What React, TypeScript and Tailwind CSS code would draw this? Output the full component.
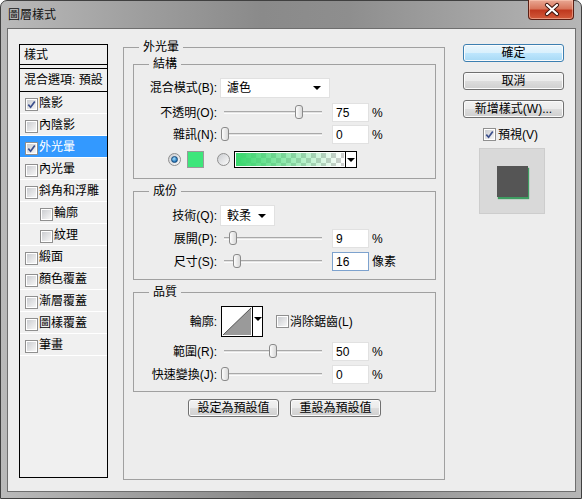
import React from 'react';

const FONT = "font-['Liberation_Sans','Noto_Sans_CJK_TC',sans-serif]";

const LAYERS = [
  { name: '陰影', on: true },
  { name: '內陰影' },
  { name: '外光暈', on: true, active: true },
  { name: '內光暈' },
  { name: '斜角和浮雕' },
  { name: '輪廓', sub: true },
  { name: '紋理', sub: true },
  { name: '緞面' },
  { name: '顏色覆蓋' },
  { name: '漸層覆蓋' },
  { name: '圖樣覆蓋' },
  { name: '筆畫' },
];

function Check({ on, className = '' }: { on?: boolean; className?: string }) {
  return (
    <span className={`relative block h-[13px] w-[13px] shrink-0 border border-[#8f8f8f] bg-white p-[1px] ${className}`}>
      <span className="block h-full w-full bg-[linear-gradient(135deg,#cbcdd1,#f6f6f6)]" />
      {on && (
        <svg className="absolute left-[1px] top-[1px]" width="9" height="9" viewBox="0 0 9 9">
          <path d="M1.3 4.6 L3.6 7.2 L7.8 1.4" fill="none" stroke="#3b4f8c" strokeWidth="1.7" />
        </svg>
      )}
    </span>
  );
}

function Radio({ on }: { on?: boolean }) {
  return (
    <span className="flex h-[13px] w-[13px] shrink-0 items-center justify-center rounded-full border border-[#8f8f8f] bg-[linear-gradient(135deg,#cbcdd1,#fbfbfb)]">
      {on && (
        <span className="h-[7px] w-[7px] rounded-full border border-[#174a7a] bg-[radial-gradient(circle_at_40%_35%,#a9e2ff,#1f73b8_70%)]" />
      )}
    </span>
  );
}

function Caret() {
  return <span className="block h-0 w-0 border-x-[4px] border-t-[4px] border-x-transparent border-t-black" />;
}

function Select({ value, w, h }: { value: string; w: string; h: string }) {
  return (
    <div className={`ml-[3px] flex items-center justify-between border border-[#e1e1e1] bg-white pl-[6px] pr-[8px] ${w} ${h}`}>
      <span>{value}</span>
      <Caret />
    </div>
  );
}

function Slider({ at }: { at: number }) {
  return (
    <div className="relative ml-[4px] h-[19px] w-[101px]">
      <div className="absolute left-[3px] right-0 top-[8px] h-[3px] border-y border-t-[#a9a9a9] border-b-[#fbfbfb] bg-[#e3e3e3]" />
      <div
        className="absolute top-[2px] h-[14px] w-[8px] rounded-[3px] border border-[#8a8a8a] bg-[linear-gradient(to_right,#fdfdfd,#d9d9d9)]"
        style={{ left: at }}
      />
    </div>
  );
}

function SliderRow({ label, at, value, unit = '%', focus, className = '' }: { label: string; at: number; value: string; unit?: string; focus?: boolean; className?: string }) {
  return (
    <div className={`flex h-[19px] items-center ${className}`}>
      <span className="w-[83px] text-right">{label}</span>
      <Slider at={at} />
      <div className={`ml-[10px] flex h-[19px] w-[37px] items-center border bg-white pl-[3px] ${focus ? 'border-[#7da2ce]' : 'border-[#e1e1e1]'}`}>
        {value}
      </div>
      <span className="ml-[3px]">{unit}</span>
    </div>
  );
}

function Group({ title, className = '', children }: { title: string; className?: string; children: React.ReactNode }) {
  return (
    <div className={`relative border border-[#a0a0a0] ${className}`}>
      <span className="absolute -top-[9px] left-[15px] bg-[#ededed] px-[4px] leading-[16px]">{title}</span>
      {children}
    </div>
  );
}

function Button({ label, primary, className = '' }: { label: string; primary?: boolean; className?: string }) {
  return (
    <div
      className={`flex h-[18px] items-center justify-center rounded-[3px] border ${
        primary
          ? 'border-[#3c7fb1] bg-[linear-gradient(#eaf6fd_0%,#d9f0fc_49%,#bee6fd_50%,#a7d9f5_100%)]'
          : 'border-[#707070] bg-[linear-gradient(#f2f2f2_0%,#ebebeb_49%,#dddddd_50%,#cfcfcf_100%)]'
      } shadow-[inset_0_0_0_1px_#fbfbfb] ${className}`}
    >
      {label}
    </div>
  );
}

export default function App() {
  return (
    <div
      className={`${FONT} relative h-[499px] w-[582px] rounded-t-[7px] border border-[#404040] bg-[linear-gradient(to_right,#bababa_0%,#9d9d9d_25%,#8a8a8a_45%,#8e8e8e_60%,#a2a2a2_80%,#b6b6b6_100%)] text-[12px] text-black`}
    >
      {/* title bar */}
      <div className="flex h-[27px] items-center pl-[7px] text-[12px] text-[#111]">圖層樣式</div>
      <div className="absolute -top-px right-[7px] h-[20px] w-[46px] rounded-b-[4px] border border-t-0 border-[#5b1f14] bg-[linear-gradient(#e9a894_0%,#d8765c_45%,#c0391f_55%,#d25a3b_100%)] shadow-[inset_0_0_0_1px_rgba(255,210,190,0.5)]">
        <svg width="46" height="19" viewBox="0 0 46 19">
          <path d="M18 5 L28 14 M28 5 L18 14" stroke="#3b130c" strokeWidth="4.2" strokeLinecap="round" />
          <path d="M18 5 L28 14 M28 5 L18 14" stroke="#ffffff" strokeWidth="2.3" strokeLinecap="round" />
        </svg>
      </div>

      {/* client */}
      <div className="ml-[6px] flex h-[464px] w-[569px] items-start border border-[#6e6e6e] bg-[#ededed]">
        {/* layer list */}
        <div className="ml-[11px] mt-[15px] flex h-[434px] w-[89px] flex-col border border-black bg-[#f0f0f0]">
          <div className="flex h-[20px] items-center border-b border-black pl-[4px]">樣式</div>
          <div className="h-[3px]" />
          <div className="flex h-[24px] items-center border-y border-black pl-[4px]">混合選項: 預設</div>
          {LAYERS.map((l) => (
            <div
              key={l.name}
              className={`flex h-[22px] items-center border-b border-white ${l.sub ? 'pl-[20px]' : 'pl-[5px]'} ${
                l.active ? 'bg-[#3399ff] text-white' : ''
              }`}
            >
              <Check on={l.on} className="mt-[3px]" />
              <span className="ml-[1px]">{l.name}</span>
            </div>
          ))}
        </div>

        {/* main */}
        <Group title="外光暈" className="ml-[15px] mt-[18px] h-[433px] w-[322px] pl-[9px] pr-[8px] pt-[16px]">
          <Group title="結構" className="pb-[10px] pt-[13px]">
            <div className="flex h-[20px] items-center">
              <span className="w-[83px] text-right">混合模式(B):</span>
              <Select value="濾色" w="w-[110px]" h="h-[20px]" />
            </div>
            <SliderRow label="不透明(O):" at={74} value="75" className="mt-[5px]" />
            <SliderRow label="雜訊(N):" at={0} value="0" className="mt-[3px]" />
            <div className="mt-[7px] flex h-[17px] items-center pl-[34px]">
              <Radio on />
              <span className="ml-[6px] h-[17px] w-[17px] border border-[#9a9a9a] bg-[#3ee67b]" />
              <span className="ml-[13px]">
                <Radio />
              </span>
              <div className="ml-[4px] flex h-[17px] w-[123px] border border-black bg-white">
                <div className="m-[1px] flex-1 bg-[linear-gradient(to_right,#37d86c,rgba(62,220,115,0)),conic-gradient(#cfcfcf_25%,#ffffff_0_50%,#cfcfcf_0_75%,#ffffff_0)] bg-[length:100%_100%,10px_10px]" />
                <div className="flex w-[11px] items-center justify-center border-l border-black">
                  <Caret />
                </div>
              </div>
            </div>
          </Group>

          <Group title="成份" className="mt-[12px] pb-[8px] pt-[13px]">
            <div className="flex h-[21px] items-center">
              <span className="w-[83px] text-right">技術(Q):</span>
              <Select value="較柔" w="w-[55px]" h="h-[21px]" />
            </div>
            <SliderRow label="展開(P):" at={8} value="9" className="mt-[3px]" />
            <SliderRow label="尺寸(S):" at={12} value="16" unit="像素" focus className="mt-[4px]" />
          </Group>

          <Group title="品質" className="mt-[12px] pb-[7px] pt-[13px]">
            <div className="flex h-[31px] items-center">
              <span className="w-[83px] text-right">輪廓:</span>
              <div className="ml-[4px] flex h-[31px] w-[42px] border border-black bg-white">
                <svg width="30" height="29" viewBox="0 0 30 29" className="mt-[0px]">
                  <polygon points="1,28 29,1 29,28" fill="#9a9a9a" />
                  <line x1="1" y1="28" x2="29" y2="1" stroke="#555" strokeWidth="1" />
                </svg>
                <div className="flex flex-1 items-start justify-center border-l border-black pt-[10px]">
                  <Caret />
                </div>
              </div>
              <Check className="ml-[13px]" />
              <span className="ml-[1px]">消除鋸齒(L)</span>
            </div>
            <SliderRow label="範圍(R):" at={48} value="50" className="mt-[5px]" />
            <SliderRow label="快速變換(J):" at={0} value="0" className="mt-[4px]" />
          </Group>

          <div className="mt-[7px] flex justify-center gap-[11px]">
            <Button label="設定為預設值" className="w-[91px]" />
            <Button label="重設為預設值" className="w-[91px]" />
          </div>
        </Group>

        {/* right column */}
        <div className="ml-[18px] mt-[15px] flex w-[101px] flex-col">
          <Button label="確定" primary />
          <Button label="取消" className="mt-[10px]" />
          <Button label="新增樣式(W)..." className="mt-[10px]" />
          <div className="ml-[20px] mt-[10px] flex h-[13px] items-center">
            <Check on />
            <span className="ml-[2px]">預視(V)</span>
          </div>
          <div className="ml-[16px] mt-[7px] flex h-[66px] w-[66px] items-center justify-center border border-[#cdcdcd] bg-[#d9d9d9]">
            <div className="h-[31px] w-[31px] bg-[#555555] shadow-[1px_2px_1px_#3f9d62]" />
          </div>
        </div>
      </div>
    </div>
  );
}
